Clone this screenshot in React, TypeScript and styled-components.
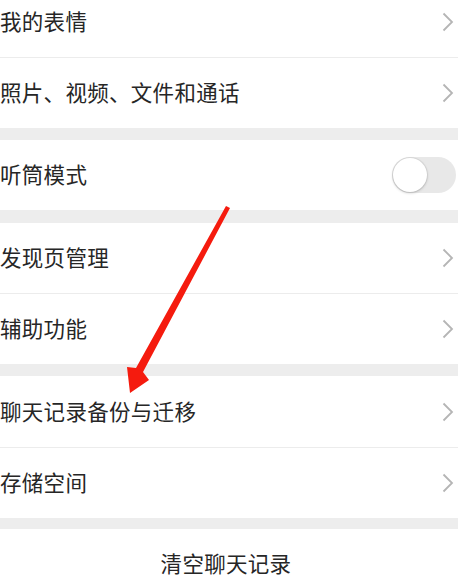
import React from 'react';
import styled, { createGlobalStyle } from 'styled-components';

const GlobalStyle = createGlobalStyle`
  html, body {
    margin: 0;
    padding: 0;
    background: #ffffff;
  }
  body {
    font-family: "Noto Sans CJK SC", "Noto Sans", sans-serif;
  }
`;

const Screen = styled.div`
  position: relative;
  width: 468px;
  height: 582px;
  overflow: hidden;
  background: #ffffff;
`;

const List = styled.div`
  width: 458px;
  margin-top: -13px;
`;

const Group = styled.div`
  background: #ffffff;
`;

const Gap = styled.div<{ $h?: number }>`
  height: ${(p) => p.$h ?? 12}px;
  background: #ededed;
`;

const Row = styled.div<{ $h?: number }>`
  height: ${(p) => p.$h ?? 70}px;
  display: flex;
  align-items: center;
  justify-content: space-between;
  & + & {
    border-top: 1px solid #ececec;
  }
`;

const Label = styled.span`
  font-size: 21.5px;
  color: #262626;
  letter-spacing: 0.3px;
  padding-bottom: 3px;
`;

const Chevron = styled.svg`
  width: 12px;
  height: 20px;
  margin-right: 4px;
`;

const Toggle = styled.div`
  width: 64px;
  height: 36px;
  border-radius: 18px;
  background: #e8e8e8;
  margin-right: 2px;
  display: flex;
  align-items: center;
  padding-left: 1px;
  box-sizing: border-box;
`;

const Knob = styled.div`
  width: 34px;
  height: 34px;
  border-radius: 50%;
  background: #ffffff;
  box-shadow: 0 1px 3px rgba(0, 0, 0, 0.2), 0 0 0 1px rgba(0, 0, 0, 0.05);
`;

const ClearButton = styled.div`
  height: 70px;
  display: flex;
  align-items: center;
  justify-content: center;
  font-size: 21.5px;
  color: #262626;
  letter-spacing: 0.3px;
  padding-right: 6px;
  padding-bottom: 3px;
  box-sizing: border-box;
`;

const ArrowOverlay = styled.svg`
  position: absolute;
  left: 0;
  top: 0;
  width: 468px;
  height: 582px;
  pointer-events: none;
`;

const Arrow = () => (
  <Chevron viewBox="0 0 12 20">
    <polyline points="1.5,1.5 10,10 1.5,18.5" fill="none" stroke="#b5b5b5" strokeWidth="1.8" />
  </Chevron>
);

type Item = { label: string; kind?: 'toggle'; h?: number };

const groups: { gap: number; items: Item[] }[] = [
  { gap: 0, items: [{ label: '我的表情' }, { label: '照片、视频、文件和通话' }] },
  { gap: 12, items: [{ label: '听筒模式', kind: 'toggle' }] },
  { gap: 13, items: [{ label: '发现页管理' }, { label: '辅助功能' }] },
  { gap: 12, items: [{ label: '聊天记录备份与迁移', h: 71 }, { label: '存储空间' }] },
];

const App = () => {
  return (
    <Screen>
      <GlobalStyle />
      <List>
        {groups.map((g, i) => (
          <React.Fragment key={i}>
            {g.gap > 0 && <Gap $h={g.gap} />}
            <Group>
              {g.items.map((item) => (
                <Row key={item.label} $h={item.h}>
                  <Label>{item.label}</Label>
                  {item.kind === 'toggle' ? (
                    <Toggle>
                      <Knob />
                    </Toggle>
                  ) : (
                    <Arrow />
                  )}
                </Row>
              ))}
            </Group>
          </React.Fragment>
        ))}
        <Gap $h={11} />
        <ClearButton>清空聊天记录</ClearButton>
      </List>
      <ArrowOverlay viewBox="0 0 468 582">
        <polygon
          points="226,206 230,208 143,372 149,380 130,393 127,367 136,368"
          fill="#f51b0e"
        />
      </ArrowOverlay>
    </Screen>
  );
};

export default App;
